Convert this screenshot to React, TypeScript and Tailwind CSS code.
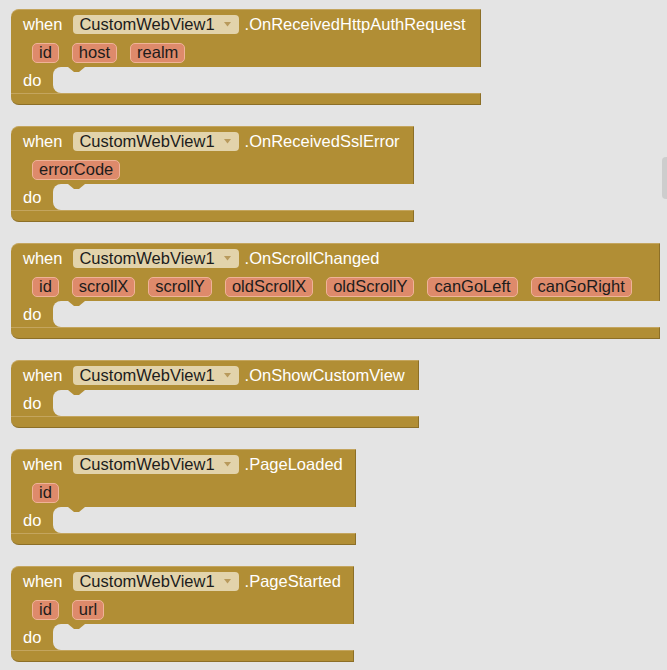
const GOLD = 'bg-[#b18e35]';

type Block = { name: string; params: string[]; width: string };

const blocks: Block[] = [
  { name: '.OnReceivedHttpAuthRequest', params: ['id', 'host', 'realm'], width: 'w-[470px]' },
  { name: '.OnReceivedSslError', params: ['errorCode'], width: 'w-[403px]' },
  {
    name: '.OnScrollChanged',
    params: ['id', 'scrollX', 'scrollY', 'oldScrollX', 'oldScrollY', 'canGoLeft', 'canGoRight'],
    width: 'w-[649px]',
  },
  { name: '.OnShowCustomView', params: [], width: 'w-[408px]' },
  { name: '.PageLoaded', params: ['id'], width: 'w-[345px]' },
  { name: '.PageStarted', params: ['id', 'url'], width: 'w-[343px]' },
];

function Dropdown({ label }: { label: string }) {
  return (
    <div className="flex h-[19px] items-center rounded-[4px] bg-[#e2d3ab] pl-[6px] pr-[8px] text-[#1c1c1c]">
      <span>{label}</span>
      <svg width="7" height="5" viewBox="0 0 7 5" className="ml-[9px]">
        <path d="M0 0 L7 0 L3.5 4.5 Z" fill="#b89a5c" />
      </svg>
    </div>
  );
}

function Param({ label }: { label: string }) {
  return (
    <span className="flex h-[20px] items-center rounded-[5px] border-[1.5px] border-[#efb398] bg-[#de8a6b] px-[6px] text-[#1c1c1c]">
      {label}
    </span>
  );
}

function EventBlock({ block }: { block: Block }) {
  const hasParams = block.params.length > 0;
  return (
    <div className={`flex flex-col ${block.width}`}>
      <div className={`${GOLD} rounded-tl-[8px] border-t border-r border-t-[#c4a55e] border-r-[#8c6f27]`}>
        <div className={`flex items-center pl-[12px] text-white ${hasParams ? 'h-[28px]' : 'h-[29px]'}`}>
          <span className="mr-[11px]">when</span>
          <Dropdown label="CustomWebView1" />
          <span className="ml-[6px]">{block.name}</span>
        </div>
        {hasParams && (
          <div className="flex h-[29px] items-center gap-[13px] pl-[21px]">
            {block.params.map((p) => (
              <Param key={p} label={p} />
            ))}
          </div>
        )}
      </div>
      <div className={`flex h-[26px] ${GOLD}`}>
        <div className="flex w-[42px] items-center pl-[12px] text-white">do</div>
        <div className="relative flex-1 rounded-l-[8px] bg-[#e4e4e4]">
          <svg width="17" height="6" viewBox="0 0 17 6" className="absolute left-[15px] top-0">
            <path d="M0 0 L6 5 L11 5 L17 0 Z" fill="#b18e35" />
          </svg>
        </div>
      </div>
      <div className={`h-[12px] ${GOLD} rounded-bl-[8px] border-t border-r border-b border-t-[#c4a55e] border-r-[#8c6f27] border-b-[#8c6f27]`} />
    </div>
  );
}

export default function App() {
  return (
    <div
      className="relative h-[670px] w-full overflow-hidden bg-[#e4e4e4] text-[16.5px] leading-none"
      style={{ fontFamily: '"Liberation Sans", Arial, sans-serif' }}
    >
      <div className="flex flex-col gap-[21px] pl-[11px] pt-[9px]">
        {blocks.map((b) => (
          <EventBlock key={b.name} block={b} />
        ))}
      </div>
      <div className="absolute right-0 top-[157px] h-[42px] w-[5px] rounded-l-[4px] bg-[#cdcdcd]" />
    </div>
  );
}
